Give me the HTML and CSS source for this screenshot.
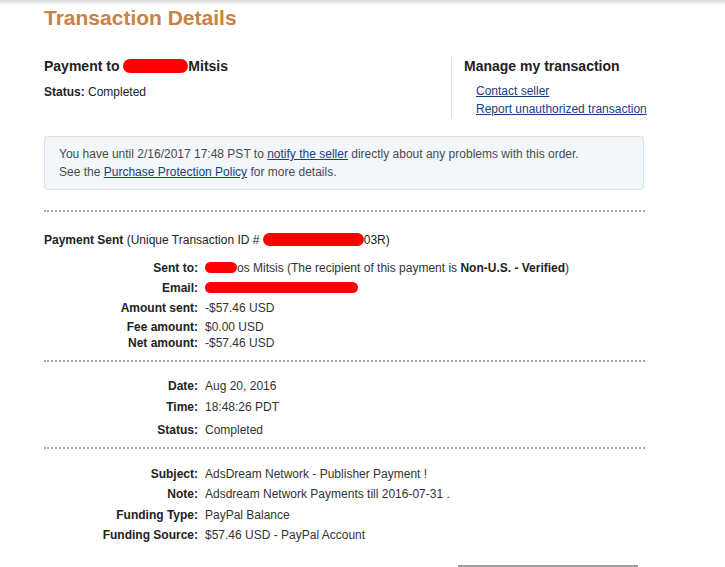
FILE: index.html
```html
<!DOCTYPE html>
<html>
<head>
<meta charset="utf-8">
<link rel="stylesheet" href="styles.css">
</head>
<body>
<div class="topshade"></div>
<div class="page">
  <h1 class="title">Transaction Details</h1>
  <div class="header">
    <div class="header-left">
      <div class="payto">Payment to <span class="redact r-payto"></span>Mitsis</div>
      <div class="status"><b>Status:</b> Completed</div>
    </div>
    <div class="header-right">
      <div class="manage">Manage my transaction</div>
      <ul class="links">
        <li><a href="#">Contact seller</a></li>
        <li><a href="#">Report unauthorized transaction</a></li>
      </ul>
    </div>
  </div>
  <div class="notice">
    <p>You have until 2/16/2017 17:48 PST to <a href="#">notify the seller</a> directly about any problems with this order.</p>
    <p>See the <a href="#">Purchase Protection Policy</a> for more details.</p>
  </div>
  <div class="dots"></div>
  <div class="sent-title"><b>Payment Sent</b> (Unique Transaction ID # <span class="redact r-id"></span>03R)</div>
  <div class="section s-amounts">
    <div class="row"><span class="lbl">Sent to:</span><span class="val"><span class="redact r-name"></span>os Mitsis (The recipient of this payment is <b>Non-U.S. - Verified</b>)</span></div>
    <div class="row"><span class="lbl">Email:</span><span class="val"><span class="redact r-email"></span></span></div>
    <div class="row"><span class="lbl">Amount sent:</span><span class="val">-$57.46 USD</span></div>
    <div class="row g3"><span class="lbl">Fee amount:</span><span class="val">$0.00 USD</span></div>
    <div class="row g0"><span class="lbl">Net amount:</span><span class="val">-$57.46 USD</span></div>
  </div>
  <div class="dots d-mid"></div>
  <div class="section s-date">
    <div class="row"><span class="lbl">Date:</span><span class="val">Aug 20, 2016</span></div>
    <div class="row g5"><span class="lbl">Time:</span><span class="val">18:48:26 PDT</span></div>
    <div class="row g7"><span class="lbl">Status:</span><span class="val">Completed</span></div>
  </div>
  <div class="dots d-low"></div>
  <div class="section s-subject">
    <div class="row"><span class="lbl">Subject:</span><span class="val">AdsDream Network - Publisher Payment !</span></div>
    <div class="row"><span class="lbl">Note:</span><span class="val">Adsdream Network Payments till 2016-07-31 .</span></div>
    <div class="row g5"><span class="lbl">Funding Type:</span><span class="val">PayPal Balance</span></div>
    <div class="row"><span class="lbl">Funding Source:</span><span class="val">$57.46 USD - PayPal Account</span></div>
  </div>
  <div class="actions"><div class="btn"></div></div>
</div>
</body>
</html>
```

FILE: styles.css
```css
html, body {
  margin: 0;
  padding: 0;
  background: #fff;
}
body {
  font-family: "Liberation Sans", Arial, sans-serif;
  font-size: 12px;
  line-height: 16px;
  color: #333;
  overflow: hidden;
}
.topshade {
  height: 6px;
  background: linear-gradient(#d9d9d9, #f4f4f4 60%, #fff);
}
.page {
  margin-left: 44px;
  width: 601px;
}
.title {
  margin: 0;
  font-size: 21px;
  line-height: 24px;
  font-weight: bold;
  color: #c88242;
}
.header {
  display: flex;
  margin-top: 27px;
}
.header-left {
  width: 407px;
  flex: none;
}
.header-right {
  flex: none;
  white-space: nowrap;
  border-left: 1px solid #e0e0e0;
  padding-left: 12px;
  height: 61px;
}
.payto, .manage {
  font-size: 14px;
  line-height: 18px;
  font-weight: bold;
  color: #222;
}
.status {
  margin-top: 9px;
  color: #222;
}
.status b { color: #222; }
.links {
  list-style: none;
  margin: 7px 0 0 0;
  padding: 0 0 0 12px;
}
.links li {
  line-height: 18px;
}
a {
  color: #17407f;
  text-decoration: underline;
}
.notice {
  margin-top: 18px;
  width: 569px;
  border: 1px solid #d5e1ea;
  border-radius: 4px;
  background: #f3f7fa;
  padding: 8px 15px 8px 14px;
  color: #4a4a4a;
}
.notice p {
  margin: 0;
  line-height: 18px;
}
.dots {
  margin-top: 20px;
  border-top: 2px dotted #a8a8a8;
}
.d-mid { margin-top: 9px; }
.d-low { margin-top: 9px; }
.sent-title {
  margin-top: 20px;
  color: #222;
}
.section { display: flex; flex-direction: column; }
.s-amounts { margin-top: 12px; }
.s-date { margin-top: 16px; }
.s-subject { margin-top: 17px; }
.row {
  display: flex;
  column-gap: 7px;
  line-height: 16px;
}
.row + .row { margin-top: 4px; }
.row.g0 { margin-top: 0; }
.row.g3 { margin-top: 3px; }
.row.g5 { margin-top: 5px; }
.row.g7 { margin-top: 7px; }
.lbl {
  width: 154px;
  flex: none;
  text-align: right;
  font-weight: bold;
  color: #222;
}
.val {
  color: #333;
  white-space: nowrap;
}
.val b { color: #222; }
.redact {
  display: inline-block;
  background: #ff0000;
  border-radius: 7px;
  vertical-align: middle;
}
.r-payto { width: 65px; height: 14px; margin: -3px 0 0 0; }
.r-id { width: 101px; height: 13px; margin-top: -3px; }
.r-name { width: 32px; height: 11px; margin-top: -3px; }
.r-email { width: 153px; height: 11px; margin-top: -3px; }
.actions {
  margin-top: 22px;
  padding-left: 414px;
}
.btn {
  width: 180px;
  height: 20px;
  border-top: 2px solid #a0a0a0;
}
```
